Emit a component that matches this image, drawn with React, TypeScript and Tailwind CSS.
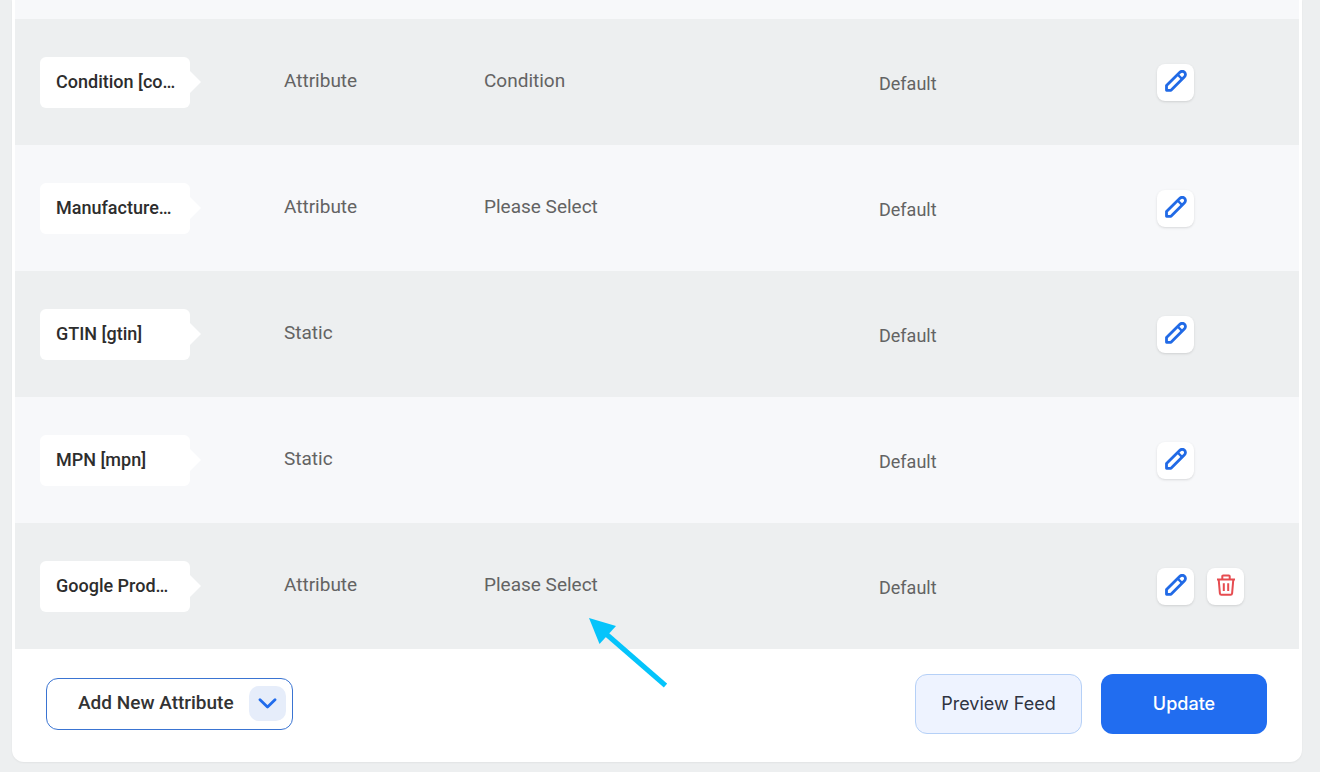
/** Attribute rows of the feed mapping table. */
const attributes = [
  { name: "Condition [co…", type: "Attribute", value: "Condition", removable: false },
  { name: "Manufacture…", type: "Attribute", value: "Please Select", removable: false },
  { name: "GTIN [gtin]", type: "Static", value: "", removable: false },
  { name: "MPN [mpn]", type: "Static", value: "", removable: false },
  { name: "Google Prod…", type: "Attribute", value: "Please Select", removable: true },
];

function PencilIcon() {
  return (
    <svg className="size-[22px]" viewBox="0 0 22 22" fill="none" stroke="#216ae6" strokeWidth="2.8" strokeLinejoin="round" aria-hidden="true">
      <path d="M1.5 20.3V15.6L14.900 2.200a3.200 3.200 0 0 1 4.600 4.600L6 20.300Z" />
      <path d="M12.600 4.500l4.600 4.600" strokeWidth="2.4" />
    </svg>
  );
}

function TrashIcon() {
  return (
    <svg className="h-[22px] w-5" viewBox="0 0 20 22" fill="none" stroke="#e64c50" strokeWidth="2" strokeLinejoin="round" aria-hidden="true">
      <path d="M1 5.500h18M6.300 5.500V2.300c0-.6.3-.9.9-.9h5.600c.6 0 .9.3.9.9v3.200M2.700 5.500l1.200 13.800c.1.9.6 1.400 1.500 1.400h9.200c.9 0 1.400-.5 1.500-1.400l1.200-13.800" />
      <path d="M7.800 9.200v7.800M12.200 9.200v7.800" />
    </svg>
  );
}

const iconButton =
  "flex size-[37px] items-center justify-center rounded-lg bg-white pb-[3px] shadow-sm";

export default function App() {
  return (
    <div className="min-h-screen bg-[#edeff0] px-3 pb-[10px] pr-[18px] font-['Roboto',sans-serif]">
      <main className="relative rounded-b-xl bg-white px-[3px] shadow-xs">
        <div className="h-[19px] bg-[#f7f8fa]" />
        <table className="w-full table-fixed border-collapse text-left text-lg text-[#636363]">
          <colgroup>
            <col className="w-[269px]" />
            <col className="w-[200px]" />
            <col className="w-[395px]" />
            <col />
            <col className="w-[142px]" />
          </colgroup>
          <tbody>
            {attributes.map((row) => (
              <tr key={row.name} className="h-[126px] odd:bg-[#edeff0] even:bg-[#f7f8fa]">
                <th scope="row" className="pl-[25px] font-medium">
                  <div className="relative flex h-[51px] w-[150px] items-center rounded-md bg-white px-4 text-[#2d2d2d]">
                    <span className="whitespace-nowrap">{row.name}</span>
                    <svg className="absolute left-full h-[22px] w-[11px]" viewBox="0 0 11 22" fill="#fff" aria-hidden="true">
                      <path d="M0 0l11 11L0 22z" />
                    </svg>
                  </div>
                </th>
                <td className="pb-[3px] text-[19px]">{row.type}</td>
                <td className="pb-[3px] text-[19px]">{row.value}</td>
                <td className="pt-1">Default</td>
                <td>
                  <div className="flex gap-[13px]">
                    <button type="button" aria-label="Edit attribute" className={iconButton}>
                      <PencilIcon />
                    </button>
                    {row.removable && (
                      <button type="button" aria-label="Delete attribute" className={iconButton}>
                        <TrashIcon />
                      </button>
                    )}
                  </div>
                </td>
              </tr>
            ))}
          </tbody>
        </table>

        {/* points at the value of the last row */}
        <svg className="absolute bottom-[74px] left-[576px] h-[72px] w-[79px]" viewBox="0 0 79 72" fill="none" aria-hidden="true">
          <path d="M17 17l60.500 52.500" stroke="#05c4fb" strokeWidth="5" />
          <path d="M1 2l27 8-16.500 18z" fill="#05c4fb" />
        </svg>

        <div className="flex h-[113px] items-center justify-between pl-[31px] pr-8 pb-1">
          <button
            type="button"
            className="flex h-[52px] items-center gap-[15px] rounded-xl border border-[#3a74d2] bg-white pl-[31px] pr-[6px] text-[19px] font-medium text-[#333]"
          >
            Add New Attribute
            <span className="flex h-[35px] w-[37px] items-center justify-center rounded-[10px] bg-[#e6edfa]">
              <svg className="h-[11px] w-[19px]" viewBox="0 0 19 11" fill="none" stroke="#216cec" strokeWidth="2.8" strokeLinecap="round" strokeLinejoin="round" aria-hidden="true">
                <path d="M2 1.800l7.500 7.200L17 1.800" />
              </svg>
            </span>
          </button>
          <div className="flex gap-[19px] font-['Inter',sans-serif] text-lg">
            <button type="button" className="h-[60px] w-[167px] rounded-xl border border-[#b5d0f7] bg-[#eef3ff] text-[#2f3442]">
              Preview Feed
            </button>
            <button type="button" className="h-[60px] w-[166px] rounded-xl bg-[#216df0] font-medium text-white">
              Update
            </button>
          </div>
        </div>
      </main>
    </div>
  );
}
